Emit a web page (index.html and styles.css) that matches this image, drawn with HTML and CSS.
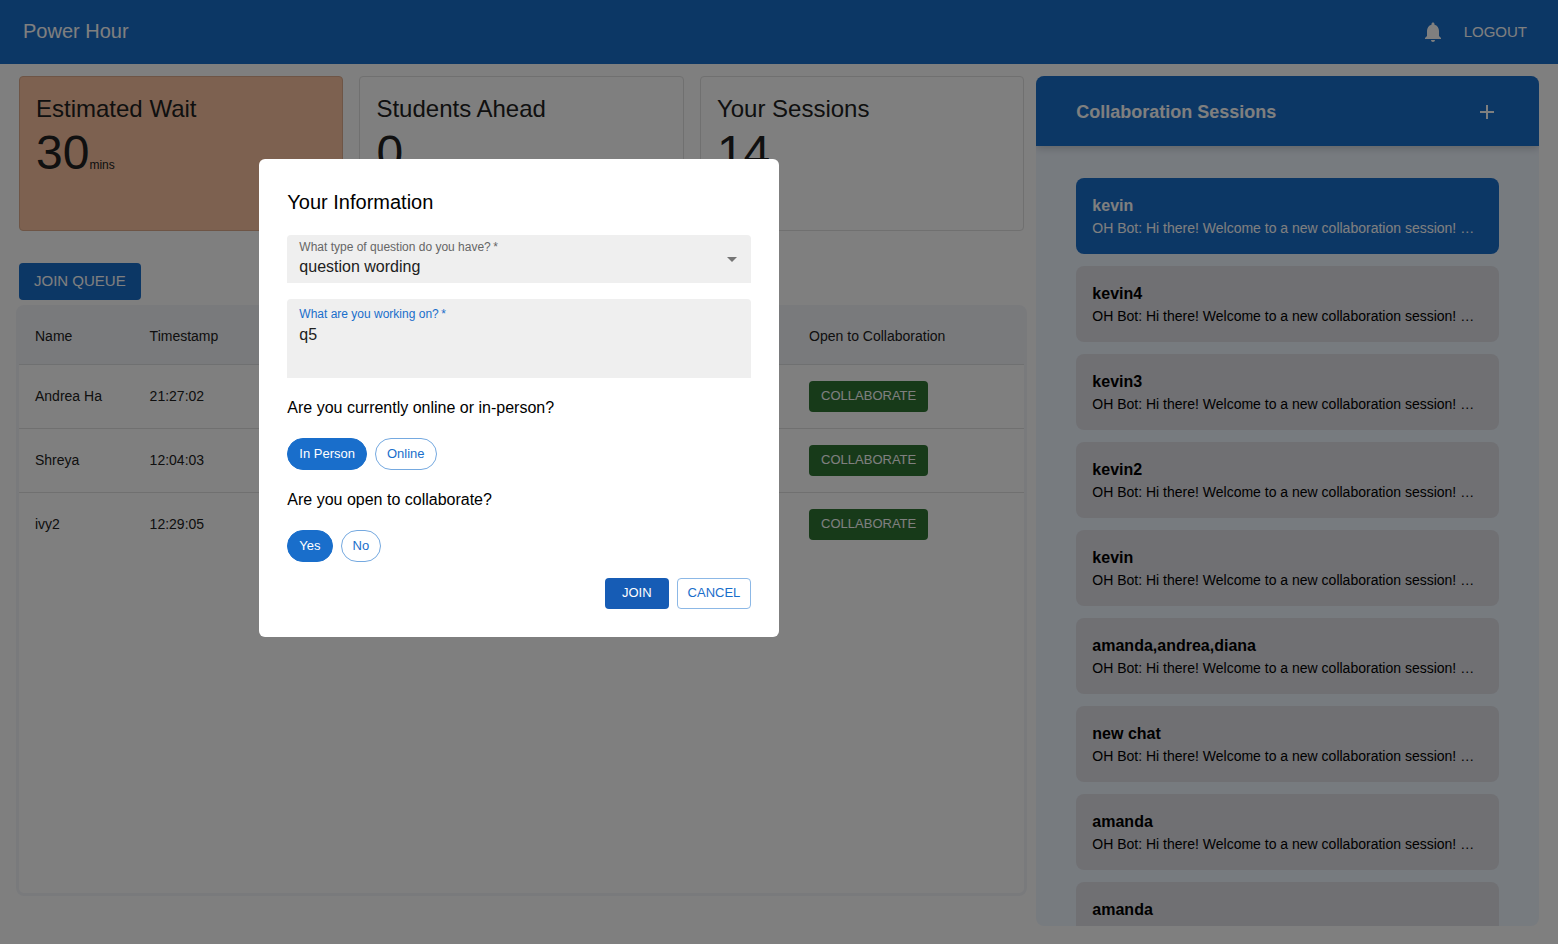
FILE: index.html
```html
<!DOCTYPE html>
<html lang="en">
<head>
<meta charset="utf-8">
<meta name="viewport" content="width=device-width, initial-scale=1">
<title>Power Hour</title>
<link rel="stylesheet" href="styles.css">
</head>
<body>
<header class="topbar">
  <h1 class="brand">Power Hour</h1>
  <div class="topbar-actions">
    <button class="icon-button" type="button" aria-label="Notifications">
      <svg class="icon" viewBox="0 0 24 24"><path d="M12 22c1.100 0 2-.9 2-2h-4c0 1.100.89 2 2 2zm6-6v-5c0-3.070-1.640-5.640-4.500-6.320V4c0-.83-.67-1.500-1.500-1.500s-1.500.67-1.500 1.500v.68C7.630 5.360 6 7.920 6 11v5l-2 2v1h16v-1l-2-2z"/></svg>
    </button>
    <button class="text-button" type="button">LOGOUT</button>
  </div>
</header>

<main class="page">
  <section class="queue">
    <div class="cards">
      <article class="card card-wait">
        <h2 class="card-title">Estimated Wait</h2>
        <p class="card-value">30<span class="card-unit">mins</span></p>
      </article>
      <article class="card">
        <h2 class="card-title">Students Ahead</h2>
        <p class="card-value">0</p>
      </article>
      <article class="card">
        <h2 class="card-title">Your Sessions</h2>
        <p class="card-value">14</p>
      </article>
    </div>
    <div class="queue-actions">
      <button class="button button-large" type="button">JOIN QUEUE</button>
    </div>
    <div class="table-frame">
      <table class="table">
        <colgroup><col class="col-name"><col><col class="col-open"></colgroup>
        <thead>
          <tr><th>Name</th><th>Timestamp</th><th>Open to Collaboration</th></tr>
        </thead>
        <tbody>
          <tr><td>Andrea Ha</td><td>21:27:02</td><td><button class="button button-green" type="button">COLLABORATE</button></td></tr>
          <tr><td>Shreya</td><td>12:04:03</td><td><button class="button button-green" type="button">COLLABORATE</button></td></tr>
          <tr><td>ivy2</td><td>12:29:05</td><td><button class="button button-green" type="button">COLLABORATE</button></td></tr>
        </tbody>
      </table>
    </div>
  </section>

  <aside class="sessions">
    <div class="sessions-header">
      <h2 class="sessions-title">Collaboration Sessions</h2>
      <button class="icon-button" type="button" aria-label="New session">
        <svg class="icon" viewBox="0 0 24 24"><path d="M19 13h-6v6h-2v-6H5v-2h6V5h2v6h6v2z"/></svg>
      </button>
    </div>
    <div class="sessions-list">
      <button class="session session-active" type="button"><span class="session-name">kevin</span><span class="session-text">OH Bot: Hi there! Welcome to a new collaboration session! …</span></button>
      <button class="session" type="button"><span class="session-name">kevin4</span><span class="session-text">OH Bot: Hi there! Welcome to a new collaboration session! …</span></button>
      <button class="session" type="button"><span class="session-name">kevin3</span><span class="session-text">OH Bot: Hi there! Welcome to a new collaboration session! …</span></button>
      <button class="session" type="button"><span class="session-name">kevin2</span><span class="session-text">OH Bot: Hi there! Welcome to a new collaboration session! …</span></button>
      <button class="session" type="button"><span class="session-name">kevin</span><span class="session-text">OH Bot: Hi there! Welcome to a new collaboration session! …</span></button>
      <button class="session" type="button"><span class="session-name">amanda,andrea,diana</span><span class="session-text">OH Bot: Hi there! Welcome to a new collaboration session! …</span></button>
      <button class="session" type="button"><span class="session-name">new chat</span><span class="session-text">OH Bot: Hi there! Welcome to a new collaboration session! …</span></button>
      <button class="session" type="button"><span class="session-name">amanda</span><span class="session-text">OH Bot: Hi there! Welcome to a new collaboration session! …</span></button>
      <button class="session" type="button"><span class="session-name">amanda</span></button>
    </div>
  </aside>
</main>

<div class="backdrop">
  <form class="dialog" role="dialog" aria-modal="true" aria-labelledby="dialog-title">
    <h2 class="dialog-title" id="dialog-title">Your Information</h2>
    <div class="field">
      <label class="field-label" for="question-type">What type of question do you have?&#8201;*</label>
      <select class="field-select" id="question-type">
        <option>question wording</option>
      </select>
      <svg class="icon field-arrow" viewBox="0 0 24 24"><path d="m7 10 5 5 5-5z"/></svg>
    </div>
    <div class="field field-multiline">
      <label class="field-label field-label-active" for="working-on">What are you working on?&#8201;*</label>
      <textarea class="field-textarea" id="working-on">q5</textarea>
    </div>
    <div class="choice">
      <p class="choice-title">Are you currently online or in-person?</p>
      <div class="chips">
        <button class="chip chip-selected" type="button" aria-pressed="true">In Person</button>
        <button class="chip" type="button" aria-pressed="false">Online</button>
      </div>
    </div>
    <div class="choice">
      <p class="choice-title">Are you open to collaborate?</p>
      <div class="chips">
        <button class="chip chip-selected" type="button" aria-pressed="true">Yes</button>
        <button class="chip" type="button" aria-pressed="false">No</button>
      </div>
    </div>
    <div class="dialog-actions">
      <button class="button button-join" type="button">JOIN</button>
      <button class="button button-outlined" type="button">CANCEL</button>
    </div>
  </form>
</div>
</body>
</html>
```
FILE: styles.css
```css
:root {
  --primary: #196ecb;
  --primary-dark: #165cb5;
  --text: #212121;
}

* {
  box-sizing: border-box;
}

body {
  margin: 0;
  background: #fff;
  color: var(--text);
  font-family: "Liberation Sans", Arial, sans-serif;
  font-size: 14px;
}

h1, h2, p {
  margin: 0;
  font-weight: 400;
}

button, select, textarea {
  font: inherit;
  color: inherit;
}

button {
  border: 0;
  padding: 0;
  background: none;
  cursor: pointer;
}

.icon {
  display: block;
  width: 24px;
  height: 24px;
  fill: currentColor;
}

.topbar {
  display: flex;
  align-items: center;
  justify-content: space-between;
  height: 64px;
  padding: 0 31px 0 23px;
  background: var(--primary);
  color: #fff;
}

.brand {
  padding-bottom: 2px;
  font-size: 20px;
}

.topbar-actions {
  display: flex;
  align-items: center;
  gap: 19px;
}

.text-button {
  padding-bottom: 2px;
  font-size: 15px;
}

.page {
  display: grid;
  grid-template-columns: minmax(0, 2fr) minmax(0, 1fr);
  gap: 12px;
  height: calc(100vh - 64px);
  padding: 12px 19px 18px;
}

.queue {
  display: flex;
  flex-direction: column;
  min-height: 0;
  padding-bottom: 30px;
}

.cards {
  display: grid;
  grid-template-columns: repeat(3, 1fr);
  gap: 16px;
}

.card {
  min-height: 155px;
  padding: 16px;
  border: 1px solid #e0e0e0;
  border-radius: 4px;
}

.card-wait {
  background: #fbc3a1;
  border-color: #dcab8d;
}

.card-title {
  font-size: 24px;
  line-height: 32px;
}

.card-value {
  font-size: 48px;
  line-height: 56px;
}

.card-unit {
  font-size: 12px;
}

.queue-actions {
  padding: 32px 0 5px;
}

.button {
  height: 31px;
  padding: 0 10px 2px;
  border-radius: 4px;
  background: var(--primary);
  color: #fff;
  font-size: 13px;
}

.button-large {
  display: block;
  height: 37px;
  padding: 0 15px 2px;
  font-size: 15px;
}

.button-green {
  display: block;
  padding: 0 12px 2px;
  background: #2e7532;
}

.button-join {
  padding: 0 17px 2px;
  background: var(--primary-dark);
}

.button-outlined {
  border: 1px solid #8cb8e6;
  background: #fff;
  color: var(--primary);
}

.table-frame {
  flex: 1;
  margin: 0 -3px;
  border: 3px solid #f3f5f9;
  border-radius: 8px;
}

.table {
  width: 100%;
  border-collapse: collapse;
  table-layout: fixed;
}

.col-name {
  width: 11.4%;
}

.col-open {
  width: 23%;
}

.table th {
  height: 56px;
  padding: 0 16px;
  border-bottom: 1px solid #dfe0e2;
  background: #f3f5f9;
  font-weight: 400;
  text-align: left;
}

.table td {
  height: 64px;
  padding: 0 16px;
  border-bottom: 1px solid #e0e0e0;
}

.table tr:last-child td {
  border-bottom: 0;
}

.sessions {
  display: flex;
  flex-direction: column;
  overflow: hidden;
  border-radius: 8px;
  background: #eff6ff;
}

.sessions-header {
  display: flex;
  flex: none;
  align-items: center;
  justify-content: space-between;
  height: 70px;
  padding: 2px 40px 0;
  background: var(--primary);
  box-shadow: 0 2px 8px rgba(0, 0, 0, 0.2);
  color: #fff;
}

.sessions-title {
  font-size: 18px;
  font-weight: 700;
}

.sessions-list {
  display: flex;
  flex: 1;
  flex-direction: column;
  gap: 12px;
  min-height: 0;
  overflow: hidden;
  padding: 32px 40px;
}

.session {
  display: flex;
  flex: none;
  flex-direction: column;
  padding: 16px;
  border-radius: 8px;
  background: #e0e1e7;
  color: #000;
  text-align: left;
}

.session-active {
  background: var(--primary);
  color: #fff;
}

.session-name {
  font-size: 16px;
  font-weight: 700;
  line-height: 24px;
}

.session-text {
  max-width: 100%;
  overflow: hidden;
  font-size: 14px;
  line-height: 20px;
  text-overflow: ellipsis;
  white-space: nowrap;
}

.backdrop {
  position: fixed;
  inset: 0;
  display: grid;
  grid-template-columns: 2fr 1fr;
  align-items: start;
  justify-items: center;
  padding-top: 159px;
  background: rgba(0, 0, 0, 0.5);
}

.dialog {
  display: flex;
  flex-direction: column;
  gap: 16px;
  width: 50%;
  min-width: 520px;
  padding: 28px;
  border-radius: 6px;
  background: #fff;
  color: #000;
}

.dialog-title {
  padding-bottom: 2px;
  font-size: 20px;
  line-height: 30px;
}

.field {
  position: relative;
  height: 48px;
  overflow: hidden;
  border-radius: 4px 4px 0 0;
  background: #efefef;
}

.field-multiline {
  height: 79px;
}

.field-label {
  position: absolute;
  top: 4px;
  left: 12px;
  color: #666;
  font-size: 12px;
  line-height: 16px;
}

.field-multiline .field-label {
  top: 7px;
}

.field-label-active {
  color: var(--primary);
}

.field-select {
  display: block;
  width: 100%;
  height: 100%;
  padding: 14px 32px 0 12px;
  border: 0;
  outline: 0;
  appearance: none;
  background: none;
  color: var(--text);
  font-size: 16px;
}

.field-arrow {
  position: absolute;
  top: 12px;
  right: 7px;
  color: #757575;
  pointer-events: none;
}

.field-textarea {
  display: block;
  width: 100%;
  height: 100%;
  padding: 24px 12px 8px;
  border: 0;
  outline: 0;
  resize: none;
  background: none;
  color: var(--text);
  font-size: 16px;
  line-height: 23px;
}

.choice {
  display: flex;
  flex-direction: column;
  gap: 16px;
}

.choice-title {
  font-size: 16px;
  line-height: 28px;
}

.chips {
  display: flex;
  gap: 8px;
}

.chip {
  height: 32px;
  padding: 0 11px 2px;
  border: 1px solid #75a9e0;
  border-radius: 16px;
  background: #fff;
  color: var(--primary);
  font-size: 13px;
}

.chip-selected {
  border-color: var(--primary);
  background: var(--primary);
  color: #fff;
}

.dialog-actions {
  display: flex;
  justify-content: flex-end;
  gap: 8px;
}
```
